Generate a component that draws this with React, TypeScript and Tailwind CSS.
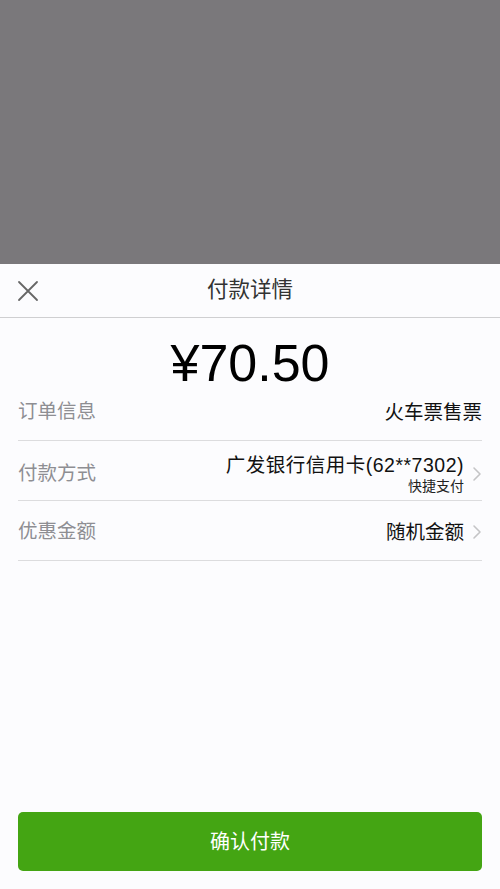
import React from 'react';

const font = { fontFamily: '"Liberation Sans", "Noto Sans CJK SC", sans-serif' };

const Chevron = () => (
  <svg width="10" height="18" viewBox="0 0 10 18" className="ml-[8px] shrink-0">
    <path d="M2 3 L8 9 L2 15" fill="none" stroke="#c4c4c6" strokeWidth="1.6" strokeLinecap="round" strokeLinejoin="round" />
  </svg>
);

interface RowProps {
  label: string;
  value: string;
  sub?: string;
  arrow?: boolean;
  height: string;
  valueClass?: string;
}

const Row: React.FC<RowProps> = ({ label, value, sub, arrow, height, valueClass = '' }) => (
  <div className={`flex items-center justify-between border-b border-[#dcdcde] ${height}`}>
    <span className="text-[19.5px] text-[#8e8e93]">{label}</span>
    <div className="flex items-center">
      <div className="flex flex-col items-end">
        <span className={`text-[19.5px] leading-[24px] text-[#111] ${valueClass}`}>{value}</span>
        {sub && <span className="text-[14px] leading-[18px] text-[#222]">{sub}</span>}
      </div>
      {arrow ? <Chevron /> : null}
    </div>
  </div>
);

export default function App() {
  return (
    <div className="flex h-[889px] w-[500px] flex-col bg-[#fcfcfe]" style={font}>
      <div className="h-[264px] shrink-0 bg-[#7a787b]" />
      <div className="flex flex-1 flex-col">
        <div className="relative flex h-[54px] items-center justify-center border-b border-[#cfcfd1]">
          <svg width="22" height="22" viewBox="0 0 22 22" className="absolute left-[17px] top-[16px]">
            <path d="M2 2 L20 20 M20 2 L2 20" stroke="#666" strokeWidth="1.8" strokeLinecap="round" />
          </svg>
          <span className="text-[21.5px] text-[#333]">付款详情</span>
        </div>
        <div className="flex h-[64px] items-center justify-center pt-[26px]">
          <span className="text-[52px] leading-none text-black">¥70.50</span>
        </div>
        <div className="flex flex-col px-[18px]">
          <Row label="订单信息" value="火车票售票" height="h-[59px] pt-[1px]" />
          <Row
            label="付款方式"
            value="广发银行信用卡(62**7302)"
            sub="快捷支付"
            arrow
            height="h-[60px] pt-[6px]"
            valueClass="tracking-[0.5px]"
          />
          <Row label="优惠金额" value="随机金额" arrow height="h-[60px] pt-[3px]" />
        </div>
        <div className="flex-1" />
        <div className="px-[18px] pb-[18px]">
          <button className="flex h-[59px] w-full items-center justify-center rounded-[5px] bg-[#44a513] text-[20px] text-white">
            确认付款
          </button>
        </div>
      </div>
    </div>
  );
}
